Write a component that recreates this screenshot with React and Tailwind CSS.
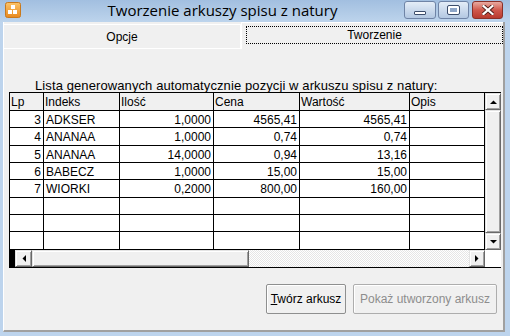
import React from 'react';

const raised =
  'bg-[#f0f0f0] border border-t-[#e3e3e3] border-l-[#e3e3e3] border-r-[#696969] border-b-[#696969] shadow-[inset_1px_1px_0_#fff,inset_-1px_-1px_0_#a0a0a0]';

const columns = [
  { label: 'Lp', key: 'lp', w: 'w-[34px]', align: 'text-right' },
  { label: 'Indeks', key: 'idx', w: 'w-[76px]', align: 'text-left' },
  { label: 'Ilość', key: 'qty', w: 'w-[94px]', align: 'text-right' },
  { label: 'Cena', key: 'price', w: 'w-[86px]', align: 'text-right' },
  { label: 'Wartość', key: 'value', w: 'w-[110px]', align: 'text-right' },
  { label: 'Opis', key: 'desc', w: 'w-[75px]', align: 'text-left' },
];

const rows = [
  { lp: '3', idx: 'ADKSER', qty: '1,0000', price: '4565,41', value: '4565,41', h: 'h-[17px]' },
  { lp: '4', idx: 'ANANAA', qty: '1,0000', price: '0,74', value: '0,74', h: 'h-[18px]' },
  { lp: '5', idx: 'ANANAA', qty: '14,0000', price: '0,94', value: '13,16', h: 'h-[17px]' },
  { lp: '6', idx: 'BABECZ', qty: '1,0000', price: '15,00', value: '15,00', h: 'h-[17px]' },
  { lp: '7', idx: 'WIORKI', qty: '0,2000', price: '800,00', value: '160,00', h: 'h-[18px]' },
  { h: 'h-[17px]' },
  { h: 'h-[17px]' },
  { h: 'h-[18px]' },
];

const Arrow = ({ dir }) => {
  const pts = {
    up: '0,4 7,4 3.5,0.5',
    down: '0,0 7,0 3.5,3.5',
    left: '4,0 4,7 0.5,3.5',
    right: '0,0 0,7 3.5,3.5',
  }[dir];
  const vertical = dir === 'up' || dir === 'down';
  return (
    <svg width={vertical ? 7 : 4} height={vertical ? 4 : 7} viewBox={vertical ? '0 0 7 4' : '0 0 4 7'}>
      <polygon points={pts} fill="#000" />
    </svg>
  );
};

const AppIcon = () => (
  <svg width="16" height="16" viewBox="0 0 16 16">
    <defs>
      <linearGradient id="ico" x1="0" y1="0" x2="0" y2="1">
        <stop offset="0" stopColor="#fbc46a" />
        <stop offset="1" stopColor="#e8891d" />
      </linearGradient>
    </defs>
    <rect x="0.5" y="0.5" width="15" height="15" rx="2" fill="url(#ico)" stroke="#c9791c" />
    <rect x="6" y="3" width="4" height="4" fill="#fff" />
    <rect x="3" y="8" width="4" height="4" fill="#fff" />
    <rect x="8" y="8" width="4" height="4" fill="#fff" />
  </svg>
);

const TitleBar = () => (
  <div className="h-[22px] flex items-start bg-gradient-to-b from-[#a2bfe0] to-[#bdd4ec]">
    <div className="ml-[5px] mt-[2px]">
      <AppIcon />
    </div>
    <div className="flex-1 pl-[20px] text-center text-[15px] leading-[21px] text-black font-['Open_Sans',sans-serif]">
      Tworzenie arkuszy spisu z natury
    </div>
    <div className="flex gap-[2px] pt-[1px] pr-[7px]">
      <div className="w-[32px] h-[18px] rounded-[3px] border border-[#6f84a6] bg-gradient-to-b from-[#e4edf7] to-[#b3c8e2] flex items-end justify-center pb-[3px]">
        <div className="w-[12px] h-[4px] rounded-[1px] bg-white border border-[#3c4d6b]"></div>
      </div>
      <div className="w-[31px] h-[18px] rounded-[3px] border border-[#6f84a6] bg-gradient-to-b from-[#e4edf7] to-[#b3c8e2] flex items-center justify-center">
        <div className="w-[11px] h-[8px] rounded-[1px] border-2 border-white outline outline-1 outline-[#3c4d6b] bg-[#8ea6c8]"></div>
      </div>
      <div className="ml-[1px] w-[31px] h-[18px] rounded-[3px] border border-[#8a3028] bg-gradient-to-b from-[#e7aaa1] via-[#d0584c] to-[#b83a2f] flex items-center justify-center">
        <svg width="12" height="10" viewBox="0 0 12 10">
          <path d="M1.5 1 L10.5 9 M10.5 1 L1.5 9" stroke="#4a1a16" strokeWidth="4" strokeLinecap="square" />
          <path d="M1.5 1 L10.5 9 M10.5 1 L1.5 9" stroke="#fff" strokeWidth="2.2" strokeLinecap="square" />
        </svg>
      </div>
    </div>
  </div>
);

const Grid = () => (
  <div className="ml-[5px] w-[492px] h-[176px] flex border-t border-b border-black bg-white">
    <div className="w-[476px] border-l border-black flex flex-col">
      <div className="flex h-[18px] border-b border-black bg-[#f0f0f0]">
        {columns.map(c => (
          <div key={c.key} className={`${c.w} shrink-0 border-r border-black pl-[1px] pt-[2px] leading-[14px]`}>
            {c.label}
          </div>
        ))}
      </div>
      {rows.map((r, i) => (
        <div key={i} className={`flex border-b border-black ${r.h}`}>
          {columns.map(c => (
            <div key={c.key} className={`${c.w} shrink-0 border-r border-black px-[2px] pt-[2px] leading-[14px] ${c.align}`}>
              {r[c.key] || ''}
            </div>
          ))}
        </div>
      ))}
      <div className="flex h-[17px]">
        <div className="w-[5px] bg-black"></div>
        <div className={`w-[17px] flex items-center justify-center ${raised}`}>
          <Arrow dir="left" />
        </div>
        <div className={`w-[217px] ${raised}`}></div>
        <div className="flex-1 bg-[conic-gradient(#e6e6e6_25%,#fff_0_50%,#e6e6e6_0_75%,#fff_0)] bg-size-[2px_2px]"></div>
        <div className={`w-[16px] flex items-center justify-center ${raised}`}>
          <Arrow dir="right" />
        </div>
      </div>
    </div>
    <div className="w-[16px] flex flex-col">
      <div className={`h-[17px] flex items-center justify-center ${raised}`}>
        <Arrow dir="up" />
      </div>
      <div className={`h-[123px] ${raised}`}></div>
      <div className={`h-[17px] flex items-center justify-center ${raised}`}>
        <Arrow dir="down" />
      </div>
      <div className="h-[17px] bg-white"></div>
    </div>
  </div>
);

export default function App() {
  return (
    <div className="w-[510px] h-[336px] flex flex-col bg-[#bdd4ed] text-black text-[12px] font-['Liberation_Sans',Arial,sans-serif]">
      <TitleBar />
      <div className="flex-1 flex pl-[3px] pr-[5px] pb-[4px]">
        <div className="flex-1 flex flex-col bg-[#f0f0f0] border-l border-white border-r-2 border-b-2 border-r-[#a0a0a0] border-b-[#a0a0a0]">
          {/* zakładki */}
          <div className="flex h-[27px]">
            <div className="w-[237px] mt-[2px] border-t border-r border-b border-white flex items-center justify-center">
              Opcje
            </div>
            <div className="flex-1 border-t border-l border-white">
              <div className="ml-[4px] mt-[3px] w-[257px] h-[18px] border border-dotted border-black flex items-center justify-center">
                Tworzenie
              </div>
            </div>
          </div>

          <div className="mt-[29px] ml-[31px] h-[14px] text-[13px] leading-[15px] tracking-[0.1px] whitespace-nowrap">
            Lista generowanych automatycznie pozycji w arkuszu spisu z natury:
          </div>

          <Grid />

          <div className="mt-[16px] flex justify-end gap-[7px] pr-[6px]">
            <button className="w-[80px] h-[30px] rounded-[2px] border border-[#8e8f8f] bg-[#f0f0f0] shadow-[inset_1px_1px_0_#fff] text-[12px]">
              <span className="underline">T</span>wórz arkusz
            </button>
            <button className="w-[144px] h-[30px] rounded-[2px] border border-[#adadad] bg-[#f0f0f0] shadow-[inset_1px_1px_0_#fff] text-[12px] text-[#8d8d8d]">
              Pokaż utworzony arkusz
            </button>
          </div>
        </div>
      </div>
    </div>
  );
}
